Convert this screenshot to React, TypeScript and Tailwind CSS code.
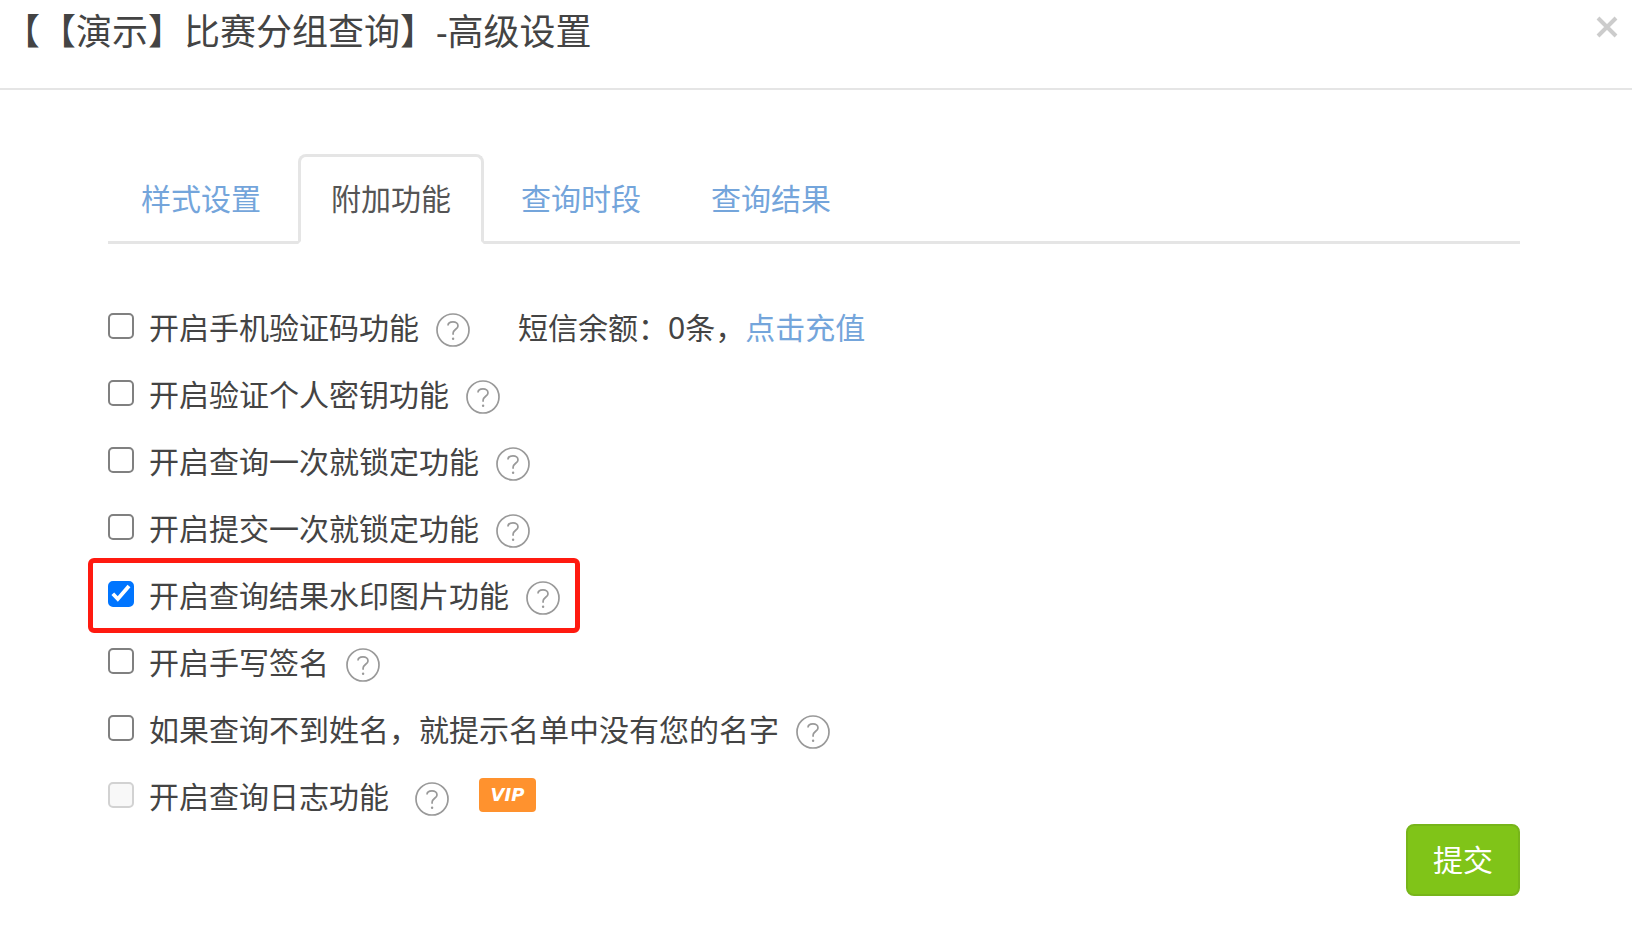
import { useState } from "react";
import clsx from "clsx";

interface Option {
  id: string;
  label: string;
  sms?: boolean;
  highlighted?: boolean;
  disabled?: boolean;
  vip?: boolean;
}

const tabs = ["样式设置", "附加功能", "查询时段", "查询结果"];

const options: Option[] = [
  { id: "sms", label: "开启手机验证码功能", sms: true },
  { id: "secret", label: "开启验证个人密钥功能" },
  { id: "lock-query", label: "开启查询一次就锁定功能" },
  { id: "lock-submit", label: "开启提交一次就锁定功能" },
  { id: "watermark", label: "开启查询结果水印图片功能", highlighted: true },
  { id: "signature", label: "开启手写签名" },
  { id: "no-name", label: "如果查询不到姓名，就提示名单中没有您的名字" },
  { id: "log", label: "开启查询日志功能", disabled: true, vip: true },
];

function HelpButton({ label }: { label: string }) {
  return (
    <button type="button" aria-label={label} className="mt-1 shrink-0 text-[#999]">
      <svg width="34" height="34" viewBox="0 0 34 34" fill="none" stroke="currentColor" strokeWidth="1.7">
        <circle cx="17" cy="17" r="16" />
        <path d="M12 12.6C12 10.2 14.2 8.8 17 8.8s5 1.6 5 4.1c0 3-4.9 3.8-4.9 7.2v1.6" />
        <circle cx="17.1" cy="25.7" r="1.2" fill="currentColor" stroke="none" />
      </svg>
    </button>
  );
}

interface CheckboxProps {
  id: string;
  checked: boolean;
  disabled?: boolean;
  onChange: () => void;
}

function Checkbox({ id, checked, disabled, onChange }: CheckboxProps) {
  return (
    <span className="relative -mt-1 mr-[15px] flex shrink-0">
      <input
        id={id}
        type="checkbox"
        checked={checked}
        disabled={disabled}
        onChange={onChange}
        className="peer size-[26px] appearance-none rounded-[5px] border-2 border-[#808080] bg-white checked:border-[#0075ff] checked:bg-[#0075ff] disabled:border-[#d2d2d2] disabled:bg-[#f8f8f8]"
      />
      <svg
        viewBox="0 0 26 26"
        className="pointer-events-none absolute inset-0 hidden size-[26px] peer-checked:block"
        fill="none"
        stroke="white"
        strokeWidth="3.8"
      >
        <path d="M4.8 12.8l5 5.2L21 5" />
      </svg>
    </span>
  );
}

export default function App() {
  const [activeTab, setActiveTab] = useState("附加功能");
  const [checked, setChecked] = useState<string[]>(["watermark"]);

  const toggle = (id: string) => {
    setChecked((prev) => (prev.includes(id) ? prev.filter((c) => c !== id) : [...prev, id]));
  };

  return (
    <div className="min-h-screen bg-white font-['Noto_Sans','Noto_Sans_CJK_SC',sans-serif] text-[30px] leading-10 text-[#444]">
      <header className="flex items-start justify-between border-b-2 border-[#e5e5e5] pt-2 pr-[14px] pb-8 pl-1">
        <h1 className="text-[36px] leading-[48px] [text-spacing-trim:space-all]">【【演示】比赛分组查询】-高级设置</h1>
        <button type="button" aria-label="关闭" className="mt-2 text-[#ccc]">
          <svg width="22" height="22" viewBox="0 0 22 22" stroke="currentColor" strokeWidth="4">
            <path d="M2 2l18 18M20 2L2 20" />
          </svg>
        </button>
      </header>

      <main className="pt-16 pr-[112px] pl-[108px]">
        <div role="tablist" className="flex gap-1 border-b-[3px] border-[#e5e5e5]">
          {tabs.map((tab) => (
            <button
              key={tab}
              type="button"
              role="tab"
              aria-selected={tab === activeTab}
              onClick={() => setActiveTab(tab)}
              className={clsx(
                "-mb-[3px] rounded-t-lg border-[3px] px-[30px] py-[22px]",
                tab === activeTab
                  ? "border-[#e5e5e5] border-b-white bg-white text-[#555]"
                  : "border-transparent text-[#74a5db]"
              )}
            >
              {tab}
            </button>
          ))}
        </div>

        <div className="pt-[50px]">
          {options.map((option) => (
            <div key={option.id} className="relative flex h-[67px] w-fit items-center">
              {option.highlighted && (
                <span className="pointer-events-none absolute -inset-x-5 -inset-y-1 rounded-md border-[5px] border-[#ff1a10]" />
              )}
              <Checkbox
                id={option.id}
                checked={checked.includes(option.id)}
                disabled={option.disabled}
                onChange={() => toggle(option.id)}
              />
              <label htmlFor={option.id} className={option.vip ? "mr-[26px]" : "mr-[17px]"}>
                {option.label}
              </label>
              <HelpButton label={option.label} />
              {option.sms && (
                <p className="ml-12">
                  短信余额：0条，
                  <a href="#recharge" className="text-[#74a5db]">
                    点击充值
                  </a>
                </p>
              )}
              {option.vip && (
                <span className="-mt-1 ml-[30px] flex h-[34px] w-[57px] items-center justify-center rounded-[4px] bg-[#ff922e] font-['DejaVu_Sans',sans-serif] text-lg font-bold text-white italic">
                  VIP
                </span>
              )}
            </div>
          ))}
        </div>

        <div className="-mt-1.5 flex justify-end pb-7">
          <button
            type="submit"
            className="rounded-lg border-2 border-[#77b51a] bg-[#80c418] px-[25px] py-[14px] text-white"
          >
            提交
          </button>
        </div>
      </main>
    </div>
  );
}
